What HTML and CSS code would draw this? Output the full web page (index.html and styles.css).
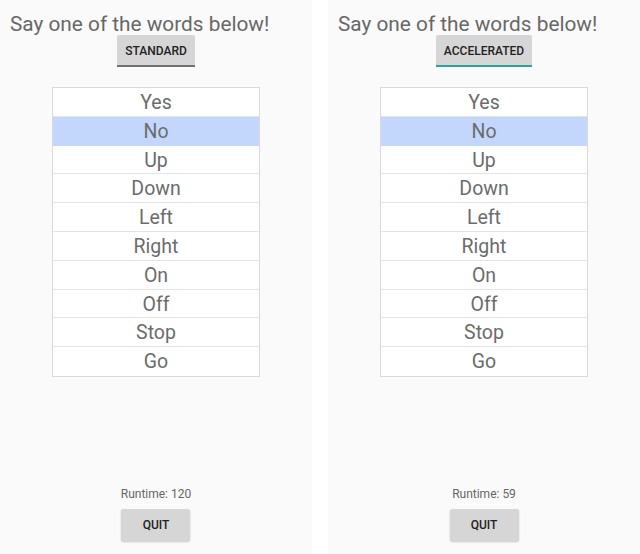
FILE: index.html
```html
<!DOCTYPE html>
<html>
<head>
<meta charset="utf-8">
<link rel="stylesheet" href="styles.css">
</head>
<body>
<div class="screens">
  <div class="panel">
    <div class="title">Say one of the words below!</div>
    <div class="mode"><span class="btn btn-standard">STANDARD</span></div>
    <div class="list">
      <div class="row">Yes</div>
      <div class="row sel">No</div>
      <div class="row">Up</div>
      <div class="row">Down</div>
      <div class="row">Left</div>
      <div class="row">Right</div>
      <div class="row">On</div>
      <div class="row">Off</div>
      <div class="row">Stop</div>
      <div class="row">Go</div>
    </div>
    <div class="footer">
      <div class="runtime">Runtime: 120</div>
      <span class="quit">QUIT</span>
    </div>
  </div>
  <div class="gap"></div>
  <div class="panel">
    <div class="title">Say one of the words below!</div>
    <div class="mode"><span class="btn btn-accel">ACCELERATED</span></div>
    <div class="list">
      <div class="row">Yes</div>
      <div class="row sel">No</div>
      <div class="row">Up</div>
      <div class="row">Down</div>
      <div class="row">Left</div>
      <div class="row">Right</div>
      <div class="row">On</div>
      <div class="row">Off</div>
      <div class="row">Stop</div>
      <div class="row">Go</div>
    </div>
    <div class="footer">
      <div class="runtime">Runtime: 59</div>
      <span class="quit">QUIT</span>
    </div>
  </div>
</div>
</body>
</html>
```

FILE: styles.css
```css
html, body {
  margin: 0;
  padding: 0;
  background: #ffffff;
  font-family: Roboto, "Liberation Sans", Arial, sans-serif;
}
.screens {
  display: flex;
  width: 640px;
  height: 554px;
}
.gap {
  width: 16px;
  background: #ffffff;
}
.panel {
  width: 312px;
  height: 554px;
  background: #fafafa;
  display: flex;
  flex-direction: column;
  align-items: center;
  box-sizing: border-box;
}
.title {
  align-self: flex-start;
  padding: 12px 0 0 10px;
  height: 23px;
  font-size: 20.8px;
  line-height: 24px;
  color: #686868;
  white-space: nowrap;
}
.mode {
  display: flex;
  justify-content: center;
}
.btn {
  display: block;
  height: 30px;
  line-height: 32px;
  padding: 0 8px;
  background: #d6d6d6;
  color: #222222;
  font-size: 12px;
  font-weight: 500;
  border-radius: 2px 2px 0 0;
  border-bottom: 2px solid #707070;
}
.btn-accel {
  border-bottom-color: #26a69a;
}
.list {
  margin-top: 20px;
  width: 208px;
  box-sizing: border-box;
  border: 1px solid #dadada;
  background: #ffffff;
}
.row {
  height: 28.8px;
  box-sizing: border-box;
  border-bottom: 1px solid #e4e4e4;
  text-align: center;
  font-size: 19.5px;
  line-height: 30px;
  color: #6c6c6c;
}
.row:last-child {
  border-bottom: none;
}
.row.sel {
  background: #c3d7fc;
  border-bottom-color: #c3d7fc;
}
.footer {
  margin-top: auto;
  padding-bottom: 13px;
  display: flex;
  flex-direction: column;
  align-items: center;
}
.runtime {
  font-size: 12px;
  line-height: 14px;
  color: #666666;
}
.quit {
  margin-top: 8px;
  width: 69px;
  height: 32px;
  line-height: 33px;
  text-align: center;
  background: #d6d6d6;
  color: #222222;
  font-size: 12px;
  font-weight: 500;
  border-radius: 2px;
  box-shadow: 0 1px 2px rgba(0, 0, 0, 0.2);
}
```
